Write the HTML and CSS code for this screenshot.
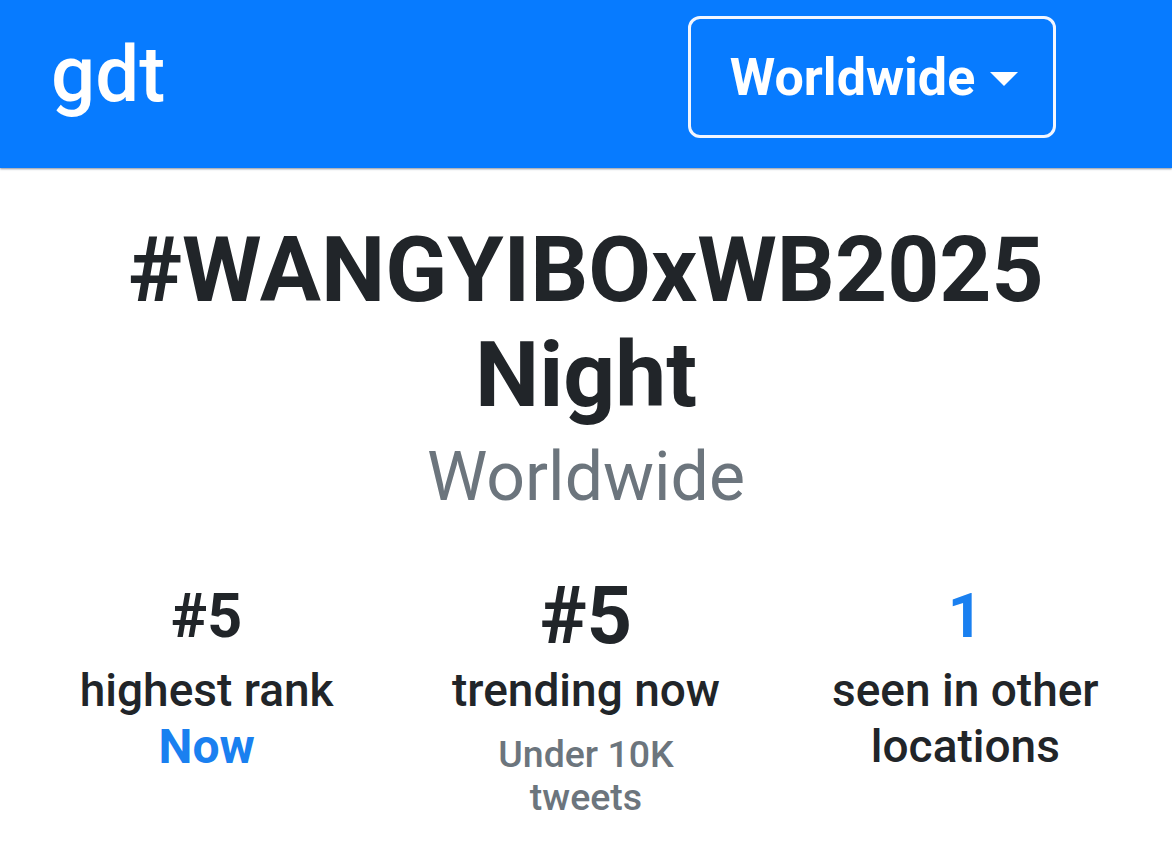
FILE: index.html
```html
<!DOCTYPE html>
<html lang="en">
<head>
<meta charset="utf-8">
<title>gdt</title>
<link rel="stylesheet" href="styles.css">
</head>
<body>
<header class="navbar">
  <div class="brand">gdt</div>
  <button class="loc-btn" type="button">
    <span class="loc-label">Worldwide</span>
    <span class="caret"></span>
  </button>
</header>
<main class="content">
  <h1 class="trend-title">#WANGYIBOxWB2025 Night</h1>
  <div class="trend-loc">Worldwide</div>
  <section class="stats">
    <div class="stat">
      <div class="stat-value">#5</div>
      <div class="stat-label">highest rank</div>
      <div class="stat-note note-blue">Now</div>
    </div>
    <div class="stat">
      <div class="stat-value value-big">#5</div>
      <div class="stat-label">trending now</div>
      <div class="stat-note note-gray">Under 10K<br>tweets</div>
    </div>
    <div class="stat">
      <div class="stat-value value-blue">1</div>
      <div class="stat-label">seen in other<br>locations</div>
    </div>
  </section>
</main>
</body>
</html>
```

FILE: styles.css
```css
* { box-sizing: border-box; }
html, body {
  margin: 0;
  padding: 0;
  background: #ffffff;
  font-family: Roboto, "Liberation Sans", Arial, sans-serif;
  color: #212529;
}
.navbar {
  height: 168px;
  background: #077bff;
  display: flex;
  align-items: center;
  padding: 0 116px 0 51px;
  box-shadow: 0 1px 2px rgba(60, 70, 90, 0.6);
}
.brand {
  color: #ffffff;
  font-size: 78px;
  font-weight: 500;
  line-height: 1;
  margin-top: -18px;
}
.loc-btn {
  margin-left: auto;
  margin-top: -14px;
  width: 368px;
  height: 122px;
  border: 3px solid #f2f6ff;
  border-radius: 12px;
  background: transparent;
  color: #ffffff;
  font-family: Roboto, "Liberation Sans", Arial, sans-serif;
  font-size: 52px;
  font-weight: 700;
  display: flex;
  align-items: center;
  justify-content: center;
  gap: 15px;
  padding: 0 0 0 4px;
}
.caret {
  width: 0;
  height: 0;
  border-left: 14px solid transparent;
  border-right: 14px solid transparent;
  border-top: 14px solid #ffffff;
  margin-top: 4px;
}
.content {
  text-align: center;
  padding: 50px 17px 0;
}
.trend-title {
  margin: 0;
  font-size: 91px;
  font-weight: 700;
  line-height: 105px;
  padding: 0 100px;
}
.trend-loc {
  color: #6c757d;
  font-size: 68px;
  line-height: 98px;
}
.stats {
  display: grid;
  grid-template-columns: repeat(3, 1fr);
  margin-top: 50px;
  align-items: start;
}
.stat-value {
  font-size: 61px;
  font-weight: 700;
  line-height: 80px;
}
.value-big {
  font-size: 79px;
}
.value-blue { color: #1a80f0; }
.stat-label {
  font-size: 46px;
  font-weight: 500;
  line-height: 56px;
  margin-top: 6px;
}
.note-blue {
  color: #1a80f0;
  font-size: 48px;
  font-weight: 700;
  line-height: 57px;
}
.note-gray {
  color: #6c757d;
  font-size: 37.5px;
  font-weight: 500;
  line-height: 43px;
  margin-top: 15px;
}
```
